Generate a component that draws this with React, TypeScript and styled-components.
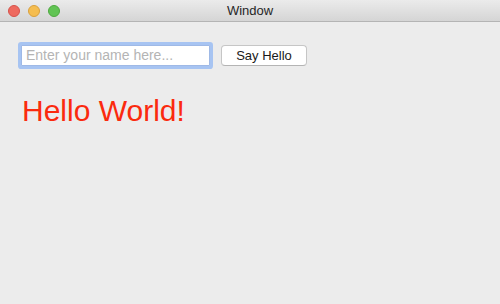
import React, { useState } from 'react';
import styled, { createGlobalStyle } from 'styled-components';

const GlobalStyle = createGlobalStyle`
  html, body {
    margin: 0;
    padding: 0;
    background: #ececec;
  }
  body {
    font-family: "Liberation Sans", Arial, sans-serif;
  }
`;

const Window = styled.div`
  width: 500px;
  height: 304px;
  background: #ececec;
  display: flex;
  flex-direction: column;
  overflow: hidden;
`;

const TitleBar = styled.div`
  height: 22px;
  flex: 0 0 22px;
  box-sizing: border-box;
  background: linear-gradient(#ebebeb, #d5d5d5);
  border-bottom: 1px solid #b4b4b4;
  display: flex;
  align-items: center;
  position: relative;
`;

const Lights = styled.div`
  display: flex;
  gap: 8px;
  padding-left: 8px;
`;

const Light = styled.span<{ $color: string; $edge: string }>`
  width: 12px;
  height: 12px;
  border-radius: 50%;
  box-sizing: border-box;
  background: ${(p) => p.$color};
  border: 0.5px solid ${(p) => p.$edge};
`;

const Title = styled.div`
  position: absolute;
  left: 0;
  right: 0;
  text-align: center;
  font-size: 13px;
  color: #262626;
  pointer-events: none;
`;

const Content = styled.div`
  padding: 22px 21px 0 21px;
  display: flex;
  flex-direction: column;
`;

const Row = styled.div`
  display: flex;
  align-items: center;
  gap: 11px;
`;

const NameInput = styled.input`
  width: 189px;
  height: 21px;
  box-sizing: border-box;
  border: 1px solid #9fb9e6;
  border-radius: 1px;
  box-shadow: 0 0 0 3px #a7c4f2;
  outline: none;
  padding: 0 4px;
  font-family: "Liberation Sans", Arial, sans-serif;
  font-size: 14px;
  color: #222;
  background: #fff;
  &::placeholder {
    color: #b4b4b4;
  }
`;

const Button = styled.button`
  width: 86px;
  height: 21px;
  margin-top: 1px;
  box-sizing: border-box;
  background: #fff;
  border: 1px solid #c6c6c6;
  border-bottom-color: #b4b4b4;
  border-radius: 4px;
  font-family: "Liberation Sans", Arial, sans-serif;
  font-size: 13px;
  color: #1a1a1a;
  padding: 0;
`;

const Greeting = styled.div`
  margin-top: 27px;
  padding-left: 1px;
  font-size: 30px;
  line-height: 36px;
  color: #fb2a0e;
`;

export default function App() {
  const [name, setName] = useState('');
  const [greeting, setGreeting] = useState('Hello World!');

  return (
    <>
      <GlobalStyle />
      <Window>
        <TitleBar>
          <Lights>
            <Light $color="#ee6a5f" $edge="#d6524a" />
            <Light $color="#f5bd4f" $edge="#d9a03c" />
            <Light $color="#61c454" $edge="#4ea93f" />
          </Lights>
          <Title>Window</Title>
        </TitleBar>
        <Content>
          <Row>
            <NameInput
              placeholder="Enter your name here..."
              value={name}
              onChange={(e) => setName(e.target.value)}
            />
            <Button onClick={() => setGreeting(`Hello ${name || 'World'}!`)}>Say Hello</Button>
          </Row>
          <Greeting>{greeting}</Greeting>
        </Content>
      </Window>
    </>
  );
}
